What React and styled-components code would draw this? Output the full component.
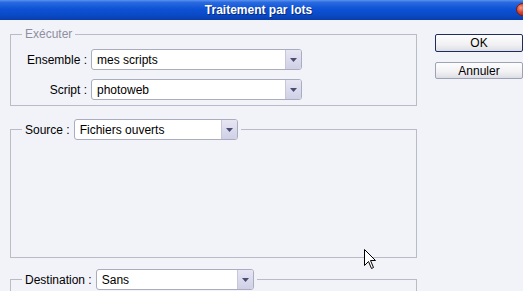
import React from "react";
import styled, { createGlobalStyle } from "styled-components";

const Global = createGlobalStyle`
  html, body {
    margin: 0;
    padding: 0;
    background: #f2f3f9;
    overflow: hidden;
  }
  body {
    font-family: "Liberation Sans", Arial, sans-serif;
    font-size: 12px;
    color: #000000;
  }
`;

const Window = styled.div`
  width: 523px;
  height: 291px;
  position: relative;
  overflow: hidden;
  background: #f2f3f9;
`;

const TitleBar = styled.div`
  height: 20px;
  position: relative;
  display: flex;
  align-items: center;
  justify-content: center;
  background: linear-gradient(
    to bottom,
    #5a92ee 0%,
    #2a6ae0 12%,
    #0d52d6 45%,
    #0a48c4 80%,
    #0a3da8 100%
  );
  color: #ffffff;
  font-weight: bold;
  font-size: 12px;
  padding-right: 6px;
  text-shadow: 1px 1px 0 #0a2a80;
`;

const CloseDot = styled.span`
  position: absolute;
  right: -6px;
  top: 3px;
  width: 11px;
  height: 11px;
  border-radius: 50%;
  background: radial-gradient(circle at 35% 35%, #f7a08a 0%, #d8402a 45%, #a81c10 100%);
  border: 1px solid #7a1c14;
`;

const Body = styled.div`
  display: flex;
  padding: 7px 0 0 10px;
`;

const LeftCol = styled.div`
  width: 408px;
  display: flex;
  flex-direction: column;
`;

const RightCol = styled.div`
  display: flex;
  flex-direction: column;
  gap: 10px;
  margin-left: 18px;
  padding-top: 7px;
`;

const Group = styled.fieldset`
  margin: ${(p) => p.$top || 0}px 0 0 0;
  padding: ${(p) => p.$pad || "0"};
  border: 1px solid #b9bbc6;
  border-radius: 0;
  min-width: 0;
  height: ${(p) => (p.$height ? `${p.$height}px` : "auto")};
  box-sizing: border-box;
`;

const Legend = styled.legend`
  margin-left: 11px;
  padding: 0 3px;
  display: flex;
  align-items: center;
  gap: 4px;
  line-height: 14px;
  color: ${(p) => (p.$muted ? "#8e8fa0" : "#000000")};
`;

const Row = styled.div`
  display: flex;
  align-items: center;
  gap: 4px;
`;

const Label = styled.span`
  width: 76px;
  text-align: right;
  white-space: nowrap;
`;

const Rows = styled.div`
  display: flex;
  flex-direction: column;
  gap: 9px;
  margin-top: 8px;
`;

const SelectBox = styled.div`
  width: ${(p) => p.$width}px;
  height: 21px;
  box-sizing: border-box;
  display: flex;
  align-items: stretch;
  background: #ffffff;
  border: 1px solid #a9adbd;
  border-radius: 3px;
  overflow: hidden;
`;

const SelectText = styled.span`
  flex: 1;
  padding-left: 5px;
  display: flex;
  align-items: center;
  white-space: nowrap;
`;

const Arrow = styled.span`
  width: 15px;
  border-left: 1px solid #c6c8d8;
  background: linear-gradient(to bottom, #e6e6f4 0%, #cfd0e6 100%);
  display: flex;
  align-items: center;
  justify-content: center;
`;

const Button = styled.button`
  width: 88px;
  height: ${(p) => (p.$default ? 18 : 17)}px;
  box-sizing: border-box;
  padding: 0;
  font-family: inherit;
  font-size: 12px;
  color: #000000;
  border: 1px solid ${(p) => (p.$default ? "#1e2d5c" : "#9ea3b4")};
  border-radius: 2px;
  background: linear-gradient(to bottom, #fdfdfe 0%, #f1f1f4 60%, #dcdde4 100%);
  line-height: 14px;
`;

const Cursor = styled.svg`
  position: absolute;
  left: 364px;
  top: 249px;
`;

const Select = ({ width, value }) => (
  <SelectBox $width={width}>
    <SelectText>{value}</SelectText>
    <Arrow>
      <svg width="7" height="4" viewBox="0 0 7 4">
        <path d="M0 0 H7 L3.5 4 Z" fill="#4a4c72" />
      </svg>
    </Arrow>
  </SelectBox>
);

export default function App() {
  return (
    <>
      <Global />
      <Window>
        <TitleBar>
          Traitement par lots
          <CloseDot />
        </TitleBar>
        <Body>
          <LeftCol>
            <Group $height={79} $pad="0 0 5px 0">
              <Legend $muted>Exécuter</Legend>
              <Rows>
                <Row>
                  <Label>Ensemble :</Label>
                  <Select width={211} value="mes scripts" />
                </Row>
                <Row>
                  <Label>Script :</Label>
                  <Select width={211} value="photoweb" />
                </Row>
              </Rows>
            </Group>
            <Group $top={13} $height={139}>
              <Legend>
                Source :
                <Select width={164} value="Fichiers ouverts" />
              </Legend>
            </Group>
            <Group $top={11} $height={60}>
              <Legend>
                Destination :
                <Select width={158} value="Sans" />
              </Legend>
            </Group>
          </LeftCol>
          <RightCol>
            <Button $default>OK</Button>
            <Button>Annuler</Button>
          </RightCol>
        </Body>
        <Cursor width="13" height="21" viewBox="0 0 13 21">
          <path
            d="M0.5 0.5 V16.5 L4.5 12.5 L7.5 19.5 L9.5 18.5 L6.5 11.5 H11.5 Z"
            fill="#ffffff"
            stroke="#000000"
            strokeWidth="1"
          />
        </Cursor>
      </Window>
    </>
  );
}
